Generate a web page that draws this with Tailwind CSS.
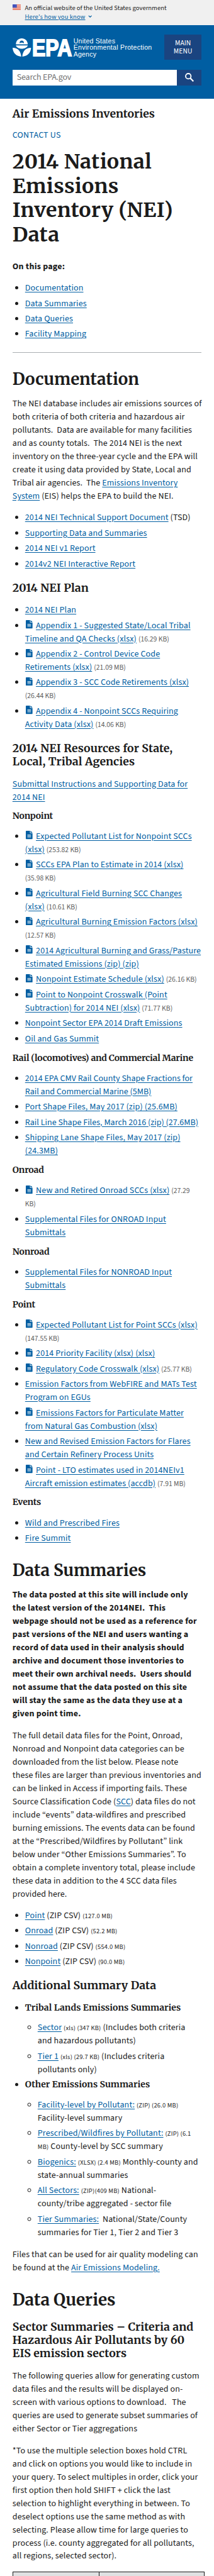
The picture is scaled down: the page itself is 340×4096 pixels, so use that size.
<!DOCTYPE html>
<html lang="en">
<head>
<meta charset="utf-8">
<title>2014 National Emissions Inventory (NEI) Data | US EPA</title>
<script src="https://cdn.jsdelivr.net/npm/@tailwindcss/browser@4"></script>
</head>
<body class="bg-white">
<div class="h-[4096px] w-[340px] overflow-hidden whitespace-nowrap font-['Source_Sans_3','Noto_Sans_CJK_SC',sans-serif] text-[14px] leading-[20.98px] text-[#1b1b1b]">
<svg class="hidden"><symbol id="doc" viewBox="0 0 13 16"><path fill="#005ea2" fill-rule="evenodd" d="M1.5 0H8v4.5h5v10c0 .9-.6 1.5-1.500 1.500h-10C.6 16 0 15.400 0 14.500v-13C0 .6.6 0 1.500 0zM9 0l4 3.600H9zM3 7v1h7V7zm0 2.300v1h7v-1zm0 2.300v1h7v-1z"/></symbol></svg>
<section class="flex h-[40.4px] items-start gap-[6.600px] bg-[#f0f0f0] px-[19.8px] pt-[6.400px] text-[10.6px] leading-[13.300px]">
<svg class="mt-[0.300px] h-[9px] w-[13.200px]" viewBox="0 0 16 11"><path fill="#fff" d="M0 0h16v11H0z"/><path stroke="#db3e1f" stroke-width=".9" d="M0 .45h16M0 2.200h16M0 4h16M0 5.700h16M0 7.400h16M0 9h16M0 10.600h16"/><path fill="#1e33b1" d="M0 0h8v6.300H0z"/><path stroke="#fff" stroke-width=".7" stroke-dasharray=".7 1.300" d="M.8 1.200h7M1.800 2.500h6M.8 3.800h7M1.800 5.100h6"/></svg>
<div><div>An official website of the United States government</div><div class="flex items-center gap-[4px] text-[#005ea2]"><span class="tracking-[0.1px] underline">Here's how you know</span><svg class="h-[4px] w-[6.400px]" viewBox="0 0 8 5"><path d="M1 1l3 3 3-3" fill="none" stroke="#005ea2" stroke-width="1.500"/></svg></div></div>
</section>
<header class="h-[116.300px] bg-[#005ea2] px-[19.8px] pt-[15px]">
<div class="flex items-start justify-between">
<svg class="mt-[4.500px] h-[31.600px] w-[222px] overflow-visible" viewBox="72 215 808 115"><g fill="#fff"><path fill-rule="evenodd" d="M91 253C92 232 106 219 125 219S158 232 160 253ZM125 231A12.500 12.500 0 0 0 113 247Q125 239 137 247A12.500 12.500 0 0 0 125 231Z"/><path d="M91 260H160C156 272 142 279 125 279S95 272 91 260Z"/><path d="M72 273C100 272 119 290 122 324C95 322 74 305 72 273ZM179 273C150 272 131 290 128 324C155 322 177 305 179 273Z"/><text x="185" y="320" font-family="Liberation Sans" font-weight="700" font-size="134" textLength="230" lengthAdjust="spacingAndGlyphs" stroke="#fff" stroke-width="7">EPA</text><g font-family="Liberation Sans" font-size="38.500"><text x="424" y="248" textLength="241">United States</text><text x="424" y="286" textLength="453">Environmental Protection</text><text x="424" y="324" textLength="132">Agency</text></g></g></svg>
<button class="flex h-[39.400px] w-[59.200px] flex-col items-center justify-center bg-[#1a4480] text-[11.600px] leading-[13.200px] text-white"><span>MAIN</span><span>MENU</span></button>
</div>
<div class="mt-[16.300px] flex h-[24.600px]">
<div class="flex flex-1 items-center bg-white pt-[1px] pl-[7px] tracking-[-0.23px] text-[#757575]">Search EPA.gov</div>
<button class="flex w-[39.300px] items-center justify-center bg-[#1a4480]"><svg class="h-[14px] w-[14px]" viewBox="0 0 14 14" fill="none" stroke="#fff"><circle cx="5.200" cy="5.200" r="4.200" stroke-width="1.800"/><path d="M8.300 8.300l5 5" stroke-width="2.200"/></svg></button>
</div>
</header>
<main class="px-[19.8px] pt-[13.900px] tracking-[0.12px] [&_a]:text-[#005ea2] [&_a]:underline [&_a]:underline-offset-[1.5px] [&_b]:tracking-[0.22px] [&_em]:text-[11.6px] [&_em]:leading-none [&_em]:tracking-normal [&_em]:not-italic [&_em]:text-[#5c5c5c] [&_h1]:font-['Merriweather','DejaVu_Serif_Condensed',serif] [&_h2]:font-['Merriweather','DejaVu_Serif_Condensed',serif] [&_h3]:font-['Merriweather','DejaVu_Serif_Condensed',serif] [&_h4]:font-['Merriweather','DejaVu_Serif_Condensed',serif] [&_h2]:mt-[23.400px] [&_h2]:mb-[14.300px] [&_h2]:text-[26px] [&_h2]:leading-[31.200px] [&_h2]:font-bold [&_h2]:tracking-normal [&_h3]:mb-[14.300px] [&_h3]:mt-[16.900px] [&_h3]:text-[17.680px] [&_h3]:leading-[21.220px] [&_h3]:font-bold [&_h3]:tracking-[0.1px] [&_h4]:mb-[14.400px] [&_h4]:mt-[10.900px] [&_h4]:text-[14px] [&_h4]:leading-[16.800px] [&_h4]:font-bold [&_h4]:tracking-[-0.2px] [&_li]:mb-[3.500px] [&_p]:mb-[14px] [&_p+ul]:-mt-[1px] [&_small]:text-[10.500px] [&_small]:leading-none [&_small]:tracking-[0.2px] [&_svg]:ml-[1.500px] [&_svg]:mr-[5px] [&_svg]:inline [&_svg]:h-[13.500px] [&_svg]:w-[10.800px] [&_svg]:align-[-1px] [&_ul]:list-disc [&_ul]:pl-[20px]">
<div class="font-['Merriweather','DejaVu_Serif_Condensed',serif] text-[17.680px] leading-[21.220px] font-bold tracking-normal">Air Emissions Inventories</div>
<div class="mt-[13.300px] tracking-[0.2px] text-[#005ea2]">CONTACT US</div>
<h1 class="mt-[11.900px] mb-[21.700px] text-[32.200px] leading-[38.600px] font-bold tracking-[0.4px]">2014 National<br>Emissions<br>Inventory (NEI)<br>Data</h1>
<p><b>On this page:</b></p>
<ul>
<li><a>Documentation</a></li>
<li><a>Data Summaries</a></li>
<li><a>Data Queries</a></li>
<li><a>Facility Mapping</a></li>
</ul>
<hr class="mt-[18px] border-[#a9aeb1]">
<h2 class="pt-[2px]">Documentation</h2>
<p>The NEI database includes air emissions sources of<br>both criteria of both criteria and hazardous air<br>pollutants.&nbsp; Data are available for many facilities<br>and as county totals.&nbsp; The 2014 NEI is the next<br>inventory on the three-year cycle and the EPA will<br>create it using data provided by State, Local and<br>Tribal air agencies.&nbsp; The <a>Emissions Inventory<br>System</a> (EIS) helps the EPA to build the NEI.</p>
<ul>
<li><a>2014 NEI Technical Support Document</a> (TSD)</li>
<li><a>Supporting Data and Summaries</a></li>
<li><a>2014 NEI v1 Report</a></li>
<li><a>2014v2 NEI Interactive Report</a></li>
</ul>
<h3>2014 NEI Plan</h3>
<ul>
<li><a>2014 NEI Plan</a></li>
<li><svg><use href="#doc"/></svg><a>Appendix 1 - Suggested State/Local Tribal<br>Timeline and QA Checks (xlsx)</a> <em>(16.29 KB)</em></li>
<li><svg><use href="#doc"/></svg><a>Appendix 2 - Control Device Code<br>Retirements (xlsx)</a> <em>(21.09 MB)</em></li>
<li><svg><use href="#doc"/></svg><a>Appendix 3 - SCC Code Retirements (xlsx)</a><br><em>(26.44 KB)</em></li>
<li><svg><use href="#doc"/></svg><a>Appendix 4 - Nonpoint SCCs Requiring<br>Activity Data (xlsx)</a> <em>(14.06 KB)</em></li>
</ul>
<h3>2014 NEI Resources for State,<br>Local, Tribal Agencies</h3>
<p class="!mb-[10px]"><a>Submittal Instructions and Supporting Data for<br>2014 NEI</a></p>
<h4 class="!mt-[10.200px]">Nonpoint</h4>
<ul>
<li><svg><use href="#doc"/></svg><a>Expected Pollutant List for Nonpoint SCCs<br>(xlsx)</a> <em>(253.82 KB)</em></li>
<li><svg><use href="#doc"/></svg><a>SCCs EPA Plan to Estimate in 2014 (xlsx)</a><br><em>(35.98 KB)</em></li>
<li><svg><use href="#doc"/></svg><a>Agricultural Field Burning SCC Changes<br>(xlsx)</a> <em>(10.61 KB)</em></li>
<li><svg><use href="#doc"/></svg><a>Agricultural Burning Emission Factors (xlsx)</a><br><em>(12.57 KB)</em></li>
<li><svg><use href="#doc"/></svg><a>2014 Agricultural Burning and Grass/Pasture<br>Estimated Emissions (zip) (zip)</a></li>
<li><svg><use href="#doc"/></svg><a>Nonpoint Estimate Schedule (xlsx)</a> <em>(26.16 KB)</em></li>
<li><svg><use href="#doc"/></svg><a>Point to Nonpoint Crosswalk (Point<br>Subtraction) for 2014 NEI (xlsx)</a> <em>(71.77 KB)</em></li>
<li><a>Nonpoint Sector EPA 2014 Draft Emissions</a></li>
<li><a>Oil and Gas Summit</a></li>
</ul>
<h4>Rail (locomotives) and Commercial Marine</h4>
<ul>
<li class="tracking-normal"><a>2014 EPA CMV Rail County Shape Fractions for<br>Rail and Commercial Marine (5MB)</a></li>
<li><a>Port Shape Files, May 2017 (zip) (25.6MB)</a></li>
<li class="tracking-[0.02px]"><a>Rail Line Shape Files, March 2016 (zip) (27.6MB)</a></li>
<li><a>Shipping Lane Shape Files, May 2017 (zip)<br>(24.3MB)</a></li>
</ul>
<h4>Onroad</h4>
<ul>
<li><svg><use href="#doc"/></svg><a>New and Retired Onroad SCCs (xlsx)</a> <em>(27.29<br>KB)</em></li>
<li><a>Supplemental Files for ONROAD Input<br>Submittals</a></li>
</ul>
<h4>Nonroad</h4>
<ul>
<li><a>Supplemental Files for NONROAD Input<br>Submittals</a></li>
</ul>
<h4>Point</h4>
<ul>
<li><svg><use href="#doc"/></svg><a>Expected Pollutant List for Point SCCs (xlsx)</a><br><em>(147.55 KB)</em></li>
<li><svg><use href="#doc"/></svg><a>2014 Priority Facility (xlsx) (xlsx)</a></li>
<li><svg><use href="#doc"/></svg><a>Regulatory Code Crosswalk (xlsx)</a> <em>(25.77 KB)</em></li>
<li><a>Emission Factors from WebFIRE and MATs Test<br>Program on EGUs</a></li>
<li><svg><use href="#doc"/></svg><a>Emissions Factors for Particulate Matter<br>from Natural Gas Combustion (xlsx)</a></li>
<li><a>New and Revised Emission Factors for Flares<br>and Certain Refinery Process Units</a></li>
<li><svg><use href="#doc"/></svg><a>Point - LTO estimates used in 2014NEIv1<br>Aircraft emission estimates (accdb)</a> <em>(7.91 MB)</em></li>
</ul>
<h4>Events</h4>
<ul>
<li><a>Wild and Prescribed Fires</a></li>
<li><a>Fire Summit</a></li>
</ul>
<h2>Data Summaries</h2>
<p><b>The data posted at this site will include only<br>the latest version of the 2014NEI.&nbsp; This<br>webpage should not be used as a reference for<br>past versions of the NEI and users wanting a<br>record of data used in their analysis should<br>archive and document those inventories to<br>meet their own archival needs.&nbsp; Users should<br>not assume that the data posted on this site<br>will stay the same as the data they use at a<br>given point time.</b></p>
<p>The full detail data files for the Point, Onroad,<br>Nonroad and Nonpoint data categories can be<br>downloaded from the list below. Please note<br>these files are larger than previous inventories and<br>can be linked in Access if importing fails. These<br>Source Classification Code (<a>SCC</a>) data files do not<br>include “events” data-wildfires and prescribed<br>burning emissions. The events data can be found<br>at the “Prescribed/Wildfires by Pollutant” link<br>below under “Other Emissions Summaries”. To<br>obtain a complete inventory total, please include<br>these data in addition to the 4 SCC data files<br>provided here.</p>
<ul>
<li><a>Point</a> (ZIP CSV) <small>(127.0 MB)</small></li>
<li><a>Onroad</a> (ZIP CSV) <small>(52.2 MB)</small></li>
<li><a>Nonroad</a> (ZIP CSV) <small>(554.0 MB)</small></li>
<li><a>Nonpoint</a> (ZIP CSV) <small>(90.0 MB)</small></li>
</ul>
<h3>Additional Summary Data</h3>
<ul>
<li><h4 class="!mt-0 !mb-[13.900px] !tracking-[0.05px]">Tribal Lands Emissions Summaries</h4>
<ul class="!list-[circle]">
<li><a>Sector</a> <small>(xls) (347 KB)</small> (Includes both criteria<br>and hazardous pollutants)</li>
<li><a>Tier 1</a> <small>(xls) (29.7 KB)</small> (Includes criteria<br>pollutants only)</li>
</ul></li>
<li><h4 class="!mt-0 !mb-[13.900px] !tracking-[0.05px]">Other Emissions Summaries</h4>
<ul class="!list-[circle]">
<li><a>Facility-level by Pollutant:</a> <small>(ZIP) (26.0 MB)</small><br>Facility-level summary</li>
<li><a>Prescribed/Wildfires by Pollutant:</a> <small>(ZIP) (6.1<br>MB)</small> County-level by SCC summary</li>
<li><a>Biogenics:</a> <small>(XLSX) (2.4 MB)</small> Monthly-county and<br>state-annual summaries</li>
<li><a>All Sectors:</a> <small>(ZIP)(409 MB)</small> National-<br>county/tribe aggregated - sector file</li>
<li><a>Tier Summaries:</a>&nbsp; National/State/County<br>summaries for Tier 1, Tier 2 and Tier 3</li>
</ul></li>
</ul>
<p class="mt-[14.500px]">Files that can be used for air quality modeling can<br>be found at the <a>Air Emissions Modeling.</a></p>
<h2>Data Queries</h2>
<h3 class="!mt-[18px]">Sector Summaries – Criteria and<br>Hazardous Air Pollutants by 60<br>EIS emission sectors</h3>
<p>The following queries allow for generating custom<br>data files and the results will be displayed on-<br>screen with various options to download.&nbsp;&nbsp; The<br>queries are used to generate subset summaries of<br>either Sector or Tier aggregations</p>
<p>*To use the multiple selection boxes hold CTRL<br>and click on options you would like to include in<br>your query. To select multiples in order, click your<br>first option then hold SHIFT + click the last<br>selection to highlight everything in between. To<br>deselect options use the same method as with<br>selecting. Please allow time for large queries to<br>process (i.e. county aggregated for all pollutants,<br>all regions, selected sector).</p>
<div class="mt-[14px] grid h-[30px] w-[305.300px] grid-cols-[137px_1fr] border border-[#1b1b1b] bg-[#dfe1e2]"><div class="border-r border-[#1b1b1b]"></div><div></div></div>
</main>
</div>
</body>
</html>
